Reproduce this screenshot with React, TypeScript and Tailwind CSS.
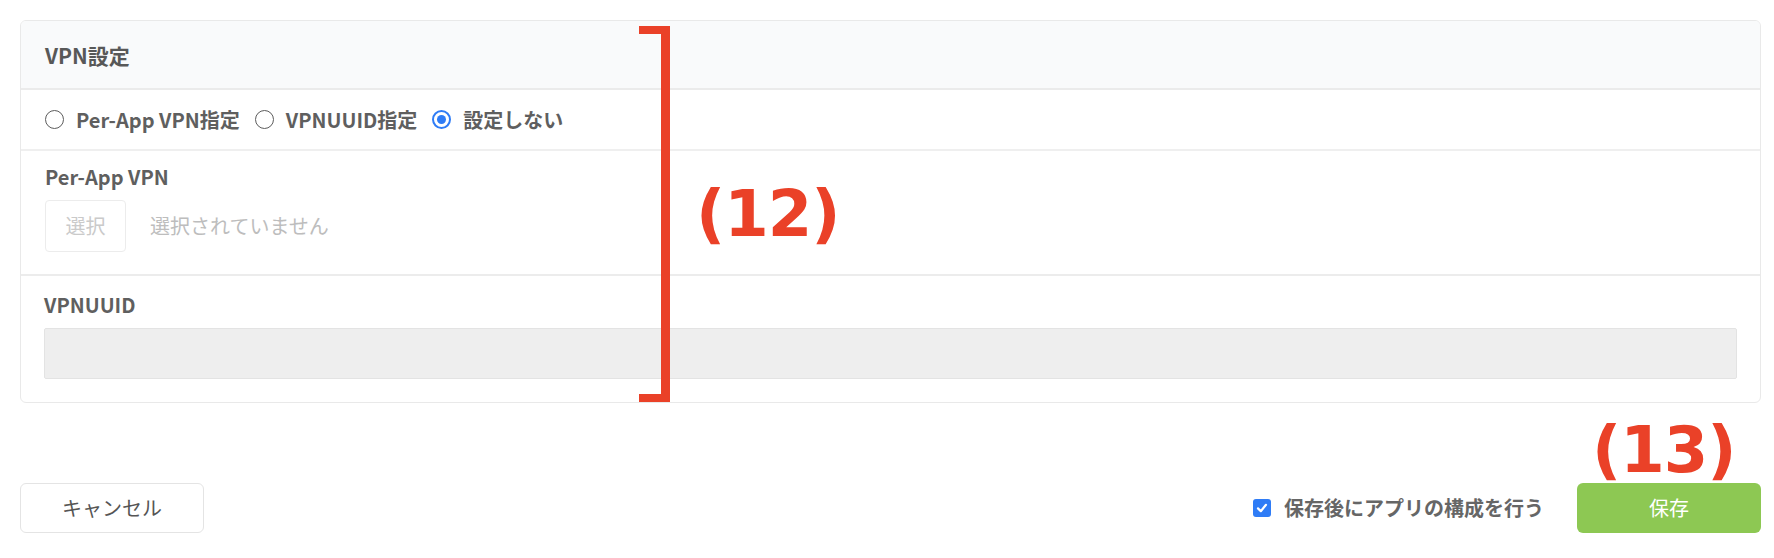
const FONT = "font-['Noto_Sans_CJK_JP','Noto_Sans',sans-serif]";

const RadioOption = ({ label, checked }: { label: string; checked?: boolean }) => (
  <label className="flex items-center gap-[12px] cursor-pointer">
    <input type="radio" name="vpnType" defaultChecked={checked} className="sr-only" />
    {checked ? (
      <span className="shrink-0 flex items-center justify-center w-[19px] h-[19px] rounded-full border-2 border-[#2f7cf6] bg-white">
        <span className="w-[9px] h-[9px] rounded-full bg-[#2f7cf6]" />
      </span>
    ) : (
      <span className="shrink-0 w-[19px] h-[19px] rounded-full border-[1.5px] border-[#5c5c5c] bg-white" />
    )}
    <span className="text-[20px] font-bold text-[#5f5f5f] leading-[24px]">{label}</span>
  </label>
);

const Annotation = ({ text, className }: { text: string; className: string }) => (
  <div
    className={`absolute font-['DejaVu_Sans',sans-serif] font-bold text-[64px] leading-none tracking-[-1px] text-[#ea4128] ${className}`}
  >
    {text}
  </div>
);

const App = () => {
  return (
    <div className={`relative w-full min-h-[558px] bg-white pl-[20px] pr-[13px] pt-[20px] ${FONT}`}>
      <div className="rounded-md border border-[#e9e9e9] bg-white overflow-hidden">
        <div className="h-[69px] px-[24px] flex items-center bg-[#f9fafb] border-b-2 border-[#ebebeb]">
          <h2 className="text-[21px] font-bold text-[#585858] leading-[24px]">VPN設定</h2>
        </div>

        <div className="h-[61px] px-[24px] flex items-center gap-[15px] border-b-2 border-[#efefef]">
          <RadioOption label="Per-App VPN指定" />
          <RadioOption label="VPNUUID指定" />
          <RadioOption label="設定しない" checked />
        </div>

        <div className="px-[24px] pt-[14px] pb-[22px] border-b-2 border-[#ececec]">
          <p className="text-[20px] font-bold text-[#5f5f5f] leading-[24px]">Per-App VPN</p>
          <div className="mt-[11px] flex items-center gap-[24px]">
            <button
              type="button"
              disabled
              className="w-[81px] h-[52px] rounded-[4px] border border-[#ececec] bg-white text-[20px] text-[#cacaca]"
            >
              選択
            </button>
            <span className="text-[20px] text-[#bdbdbd]">選択されていません</span>
          </div>
        </div>

        <div className="px-[23px] pt-[17px] pb-[23px]">
          <p className="text-[20px] font-bold text-[#5f5f5f] leading-[24px]">VPNUUID</p>
          <input
            type="text"
            disabled
            className="mt-[11px] block w-full h-[51px] rounded-[2px] border border-[#e3e3e3] bg-[#eeeeee] px-3 text-[18px]"
          />
        </div>
      </div>

      <div className="mt-[80px] flex items-center justify-between">
        <button
          type="button"
          className="w-[184px] h-[50px] rounded-md border border-[#e4e4e4] bg-white text-[20px] text-[#555555]"
        >
          キャンセル
        </button>

        <div className="flex items-center">
          <label className="flex items-center gap-[13px] cursor-pointer">
            <input type="checkbox" defaultChecked className="sr-only" />
            <span className="shrink-0 flex items-center justify-center w-[18px] h-[18px] rounded-[3px] bg-[#2f7cf6]">
              <svg viewBox="0 0 12 12" className="w-[12px] h-[12px]" fill="none">
                <path d="M2 6.4 4.8 9.2 10 2.8" stroke="white" strokeWidth="2.2" strokeLinecap="round" strokeLinejoin="round" />
              </svg>
            </span>
            <span className="text-[20px] font-bold text-[#666666]">保存後にアプリの構成を行う</span>
          </label>
          <button
            type="button"
            className="ml-[33px] w-[184px] h-[50px] rounded-md bg-[#8dc853] text-[20px] text-white"
          >
            保存
          </button>
        </div>
      </div>

      {/* annotation overlay: bracket + numbers */}
      <div className="absolute left-[639px] top-[26px] w-[31px] h-[376px] border-t-8 border-b-8 border-r-[9px] border-[#ea4128]" />
      <Annotation text="(12)" className="left-[696px] top-[182px]" />
      <Annotation text="(13)" className="left-[1592px] top-[418px]" />
    </div>
  );
};

export default App;
